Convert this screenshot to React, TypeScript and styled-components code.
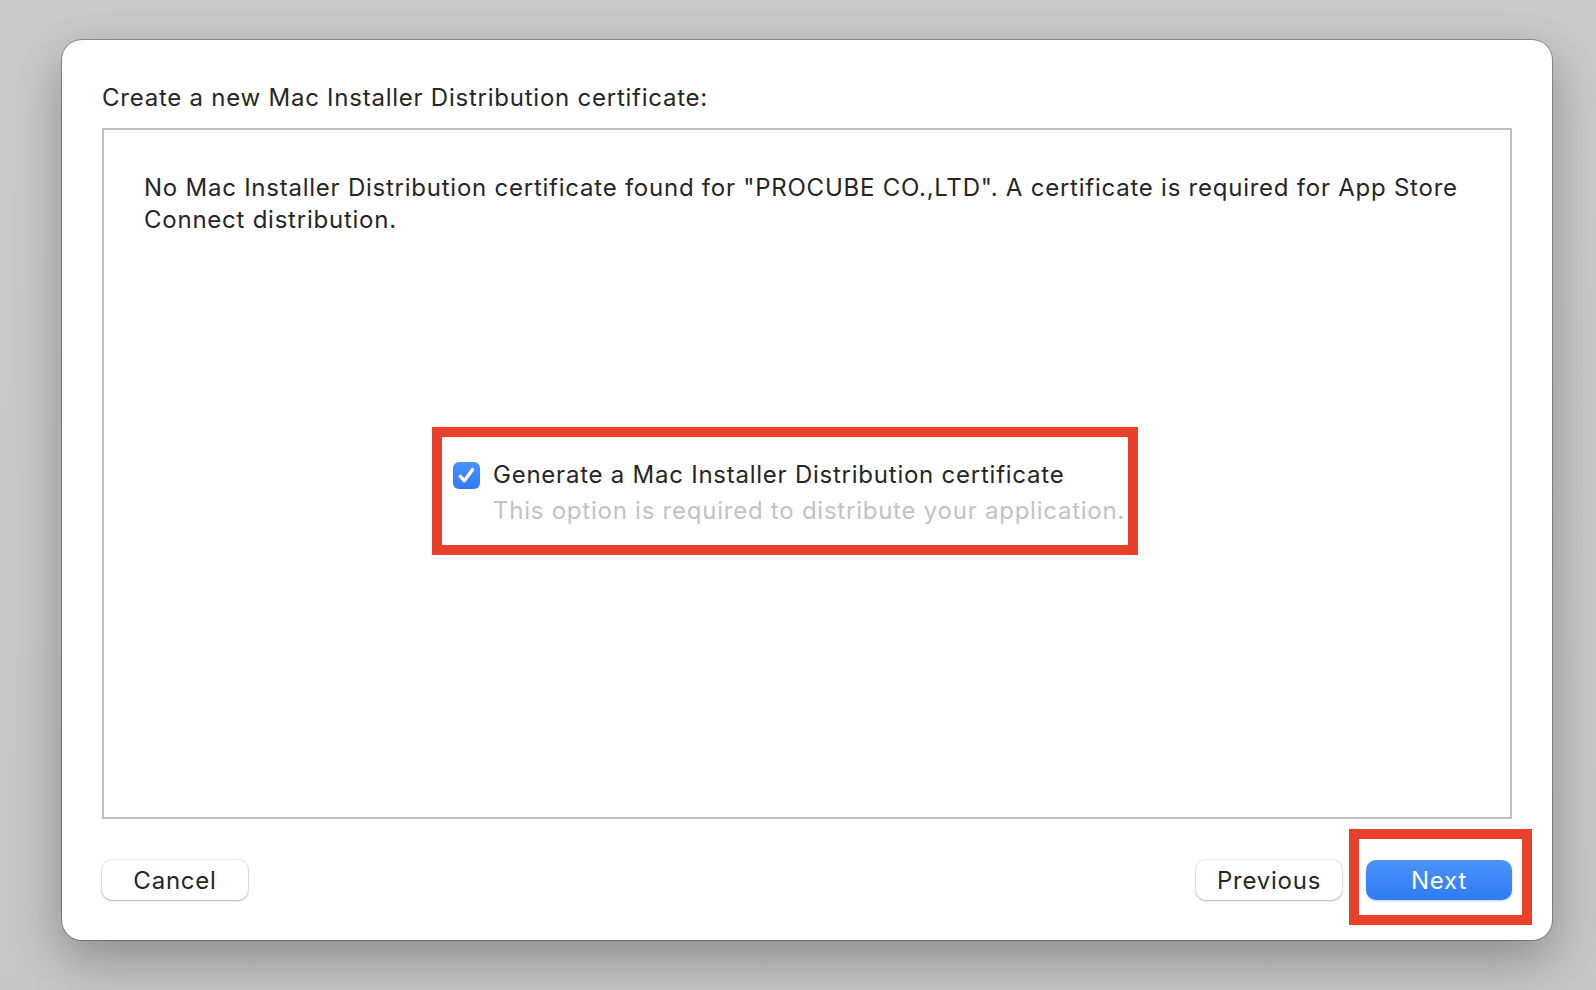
import styled, { createGlobalStyle } from "styled-components";

const GlobalStyle = createGlobalStyle`
  html, body {
    margin: 0;
    padding: 0;
    background: #c9c9c9;
  }
  body {
    font-family: Inter, "Noto Sans", "Liberation Sans", sans-serif;
    letter-spacing: 0.76px;
    -webkit-font-smoothing: antialiased;
  }
`;

const Page = styled.div`
  width: 1596px;
  height: 990px;
  box-sizing: border-box;
  padding: 40px 44px 0 62px;
  background: linear-gradient(180deg, #cacaca 0%, #c6c6c6 100%);
  overflow: hidden;
`;

const Dialog = styled.div`
  width: 1490px;
  height: 900px;
  box-sizing: border-box;
  padding: 43px 40px 40px;
  background: #ffffff;
  border-radius: 20px;
  box-shadow: 0 0 0 1px rgba(0, 0, 0, 0.28), 0 18px 50px rgba(0, 0, 0, 0.3);
  display: flex;
  flex-direction: column;
`;

const Title = styled.div`
  font-size: 24px;
  line-height: 30px;
  color: #262626;
  margin-bottom: 15px;
`;

const ContentBox = styled.div`
  flex: 1;
  border: 2px solid #bfbfbf;
  padding: 42px 40px;
  display: flex;
  flex-direction: column;
`;

const Message = styled.p`
  margin: 0;
  font-size: 24px;
  line-height: 32px;
  color: #262626;
  max-width: 1330px;
`;

const Highlight = styled.div`
  align-self: flex-start;
  margin: 191px 0 0 288px;
  border: 10px solid #e8402a;
  padding: 20px 3px 16px 11px;
  display: grid;
  grid-template-columns: 27px auto;
  column-gap: 13px;
  align-items: center;
`;

const Checkbox = styled.span`
  width: 27px;
  height: 27px;
  border-radius: 6px;
  background: linear-gradient(180deg, #4a93fa 0%, #2f7af4 100%);
  display: flex;
  align-items: center;
  justify-content: center;
`;

const OptionLabel = styled.span`
  font-size: 24px;
  line-height: 36px;
  color: #262626;
`;

const OptionHint = styled.span`
  grid-column: 2;
  font-size: 24px;
  line-height: 36px;
  color: #c2c2c2;
`;

const Footer = styled.div`
  margin-top: 41px;
  display: flex;
  justify-content: space-between;
  align-items: center;
`;

const ButtonGroup = styled.div`
  display: flex;
  gap: 24px;
`;

const Button = styled.button<{ $primary?: boolean; $width: number }>`
  width: ${(p) => p.$width}px;
  height: 40px;
  border: none;
  border-radius: 10px;
  font-family: inherit;
  font-size: 24px;
  letter-spacing: 0.76px;
  padding: 0;
  cursor: pointer;
  color: ${(p) => (p.$primary ? "#ffffff" : "#262626")};
  background: ${(p) =>
    p.$primary ? "linear-gradient(180deg, #4b93f9 0%, #2f7bf5 100%)" : "#ffffff"};
  box-shadow: ${(p) =>
    p.$primary
      ? "0 1px 2px rgba(0, 60, 160, 0.25)"
      : "0 0 0 1px rgba(0, 0, 0, 0.07), 0 1px 2px rgba(0, 0, 0, 0.25)"};
`;

const Marked = styled.span`
  position: relative;
  display: inline-flex;
`;

const MarkFrame = styled.span`
  position: absolute;
  left: -17px;
  right: -20px;
  top: -31px;
  bottom: -25px;
  border: 10px solid #e8402a;
  pointer-events: none;
`;

const CheckIcon = () => (
  <svg width="21" height="21" viewBox="0 0 21 21" fill="none">
    <path
      d="M4.2 11.2 L8.4 15.8 L16.6 4.6"
      stroke="#ffffff"
      strokeWidth="3.4"
      strokeLinecap="round"
      strokeLinejoin="round"
    />
  </svg>
);

export default function App() {
  return (
    <>
      <GlobalStyle />
      <Page>
        <Dialog>
          <Title>Create a new Mac Installer Distribution certificate:</Title>
          <ContentBox>
            <Message>
              No Mac Installer Distribution certificate found for "PROCUBE CO.,LTD". A
              certificate is required for App Store Connect distribution.
            </Message>
            <Highlight>
              <Checkbox>
                <CheckIcon />
              </Checkbox>
              <OptionLabel>Generate a Mac Installer Distribution certificate</OptionLabel>
              <OptionHint>This option is required to distribute your application.</OptionHint>
            </Highlight>
          </ContentBox>
          <Footer>
            <Button $width={146}>Cancel</Button>
            <ButtonGroup>
              <Button $width={146}>Previous</Button>
              <Marked>
                <Button $primary $width={146}>
                  Next
                </Button>
                <MarkFrame />
              </Marked>
            </ButtonGroup>
          </Footer>
        </Dialog>
      </Page>
    </>
  );
}
